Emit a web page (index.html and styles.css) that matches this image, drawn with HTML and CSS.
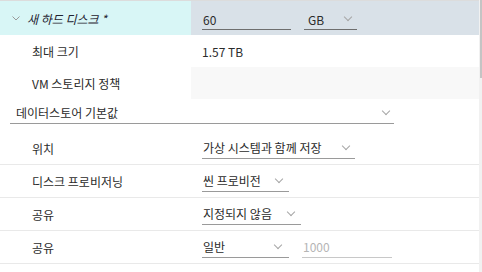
FILE: index.html
```html
<!DOCTYPE html>
<html>

<head>
    <meta charset="UTF-8">
    <title>새 하드 디스크</title>
    <link rel="stylesheet" href="styles.css">
</head>

<body>
    <div class="page">
        <div class="sheet">
            <!-- Disk header row -->
            <div class="row head">
                <div class="name">
                    <span class="caret"><svg width="8" height="5" viewBox="0 0 8 5"><path d="M0.5 0.5 L4 4 L7.5 0.5" fill="none" stroke="#9a9a9a" stroke-width="1"/></svg></span>
                    <span class="title">새 하드 디스크 *</span>
                </div>
                <div class="value">
                    <div class="field dark size">60</div>
                    <div class="field dark select unit">GB<span class="chev"></span></div>
                </div>
            </div>
            <div class="row plain">
                <div class="label">최대 크기</div>
                <div class="value">1.57 TB</div>
            </div>
            <div class="row plain">
                <div class="label">VM 스토리지 정책</div>
                <div class="value shade"></div>
            </div>
            <div class="row store">
                <div class="field select wide">데이터스토어 기본값<span class="chev"></span></div>
            </div>
            <div class="row line">
                <div class="label">위치</div>
                <div class="value">
                    <div class="field select loc">가상 시스템과 함께 저장<span class="chev"></span></div>
                </div>
            </div>
            <div class="row line">
                <div class="label">디스크 프로비저닝</div>
                <div class="value">
                    <div class="field select prov">씬 프로비전<span class="chev"></span></div>
                </div>
            </div>
            <div class="row line">
                <div class="label">공유</div>
                <div class="value">
                    <div class="field select share">지정되지 않음<span class="chev"></span></div>
                </div>
            </div>
            <div class="row line">
                <div class="label">공유</div>
                <div class="value">
                    <div class="field select normal">일반<span class="chev"></span></div>
                    <div class="field muted count">1000</div>
                </div>
            </div>
        </div>
        <div class="scroll"><div class="thumb"></div></div>
    </div>
</body>

</html>
```

FILE: styles.css
```css
body {
    font-family: "Noto Sans CJK KR", "Noto Sans", sans-serif;
    font-size: 12px;
    color: #2b2b2b;
    margin: 0;
    padding: 0;
    background: #fff;
}

.page {
    display: flex;
    width: 482px;
    height: 272px;
    overflow: hidden;
}

.sheet {
    width: 479px;
    border-top: 1px solid #dcdcdc;
}

.scroll {
    width: 3px;
    background: #f1f1f1;
}

.thumb {
    width: 2px;
    height: 78px;
    margin-left: 1px;
    background: #c4c4c4;
}

.row {
    display: flex;
    align-items: stretch;
}

.head {
    height: 34px;
}

.plain {
    height: 32px;
}

.store {
    height: 33px;
    align-items: center;
    padding-left: 10px;
}

.line {
    height: 32px;
    border-bottom: 1px solid #e9e9e9;
}

.name {
    width: 191px;
    background: #d8f6f6;
    display: flex;
    align-items: center;
}

.caret {
    display: flex;
    width: 15px;
    padding-left: 12px;
    margin-top: 1px;
}

.title {
    font-style: italic;
    color: #1f2330;
}

.label {
    width: 159px;
    padding-left: 32px;
    display: flex;
    align-items: center;
}

.value {
    flex: 1;
    display: flex;
    align-items: center;
    gap: 13px;
    padding-left: 11px;
}

.head .value {
    background: #d9e1e8;
    padding-left: 11px;
}

.shade {
    background: #f8f8f8;
}

.field {
    height: 21px;
    line-height: 21px;
    border-bottom: 1px solid #9a9a9a;
    box-sizing: border-box;
    display: flex;
    align-items: center;
    padding-left: 1px;
}

.field.dark {
    border-bottom-color: #6e6e6e;
    margin-top: 3px;
}

.select {
    justify-content: space-between;
    padding-right: 7px;
}

.chev {
    width: 5px;
    height: 5px;
    border-right: 1px solid #a6a6a6;
    border-bottom: 1px solid #a6a6a6;
    transform: rotate(45deg);
    margin-top: -4px;
}

.size { width: 89px; }
.unit { width: 53px; padding-left: 4px; padding-right: 6px; }
.wide { width: 384px; padding-left: 6px; padding-right: 5px; margin-top: -5px; }
.loc { width: 153px; padding-right: 6px; }
.prov { width: 87px; }
.share { width: 99px; }
.normal { width: 87px; padding-right: 8px; }

.muted {
    color: #b5b5b5;
    border-bottom-color: #c8c8c8;
}

.count { width: 90px; }
```
